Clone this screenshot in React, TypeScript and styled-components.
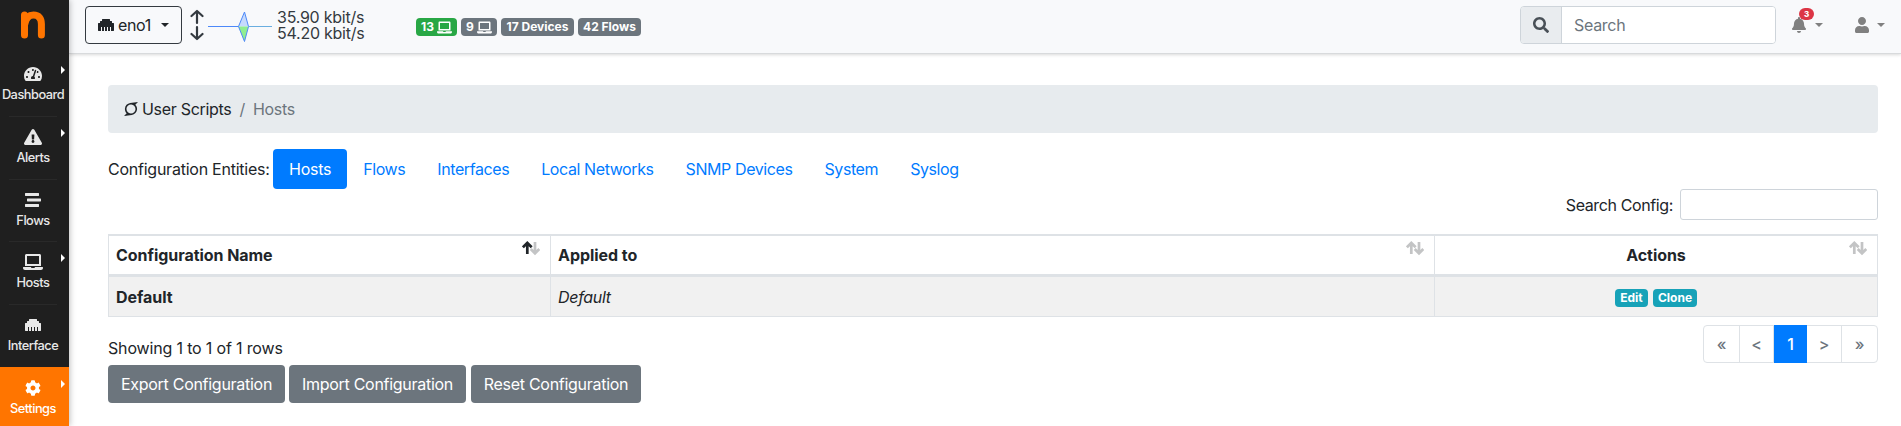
import React from "react";
import styled, { createGlobalStyle } from "styled-components";
import {
  FaTachometerAlt,
  FaExclamationTriangle,
  FaStream,
  FaLaptop,
  FaEthernet,
  FaCog,
  FaSearch,
  FaBell,
  FaUser,
  FaSuperpowers,
} from "react-icons/fa";

const GlobalStyle = createGlobalStyle`
  *, *::before, *::after { box-sizing: border-box; }
  body {
    margin: 0;
    overflow: hidden;
    background: #fff;
    color: #212529;
    font-family: Inter, "Liberation Sans", sans-serif;
    font-size: 16px;
    line-height: 24px;
    letter-spacing: -0.38px;
  }
  svg { display: block; flex: none; }
`;

const Page = styled.div`
  display: flex;
  height: 426px;
  overflow: hidden;
`;

const Sidebar = styled.nav`
  width: 69px;
  flex: none;
  display: flex;
  flex-direction: column;
  background: #1f1f1f;
  box-shadow: 1px 0 6px rgba(0, 0, 0, 0.25);
  z-index: 1;
`;

const Logo = styled.div`
  height: 53px;
  flex: none;
  padding: 11px 0 0 20px;
`;

const NavItem = styled.a<{ $active?: boolean; $last?: boolean }>`
  position: relative;
  height: 62.75px;
  flex: none;
  display: flex;
  flex-direction: column;
  align-items: center;
  padding-top: 12px;
  padding-right: 3px;
  color: ${(p) => (p.$active ? "#fff" : "#e8e8e8")};
  background: ${(p) => (p.$active ? "#ff7500" : "transparent")};
  font-size: 12.8px;
  line-height: 20px;
  font-weight: 500;
  letter-spacing: -0.5px;
  white-space: nowrap;

  &::after {
    content: "";
    display: ${(p) => (p.$active || p.$last ? "none" : "block")};
    position: absolute;
    left: 9px;
    right: 12px;
    bottom: -1px;
    height: 1px;
    background: #292929;
  }
`;

const NavIcon = styled.span`
  height: 18px;
  margin-bottom: 2px;
  display: flex;
  align-items: center;
  font-size: 16px;
`;

const NavCaret = styled.i`
  position: absolute;
  right: 4px;
  top: 13px;
  border: 4px solid transparent;
  border-left-color: #fff;
  border-right-width: 0;
`;

const Main = styled.div`
  flex: 1;
  min-width: 0;
  display: flex;
  flex-direction: column;
`;

const Topbar = styled.header`
  height: 54px;
  flex: none;
  display: flex;
  align-items: flex-start;
  padding: 6px 16px 0 16px;
  background: #f8f9fb;
  border-bottom: 1px solid #d8dadc;
  box-shadow: 0 1px 3px rgba(0, 0, 0, 0.15);
`;

const Caret = styled.i`
  border: 4px solid transparent;
  border-top-color: currentColor;
  border-bottom-width: 0;
`;

const IfaceButton = styled.button`
  width: 97px;
  height: 38px;
  padding: 0 12px;
  display: flex;
  align-items: center;
  border: 1px solid #343a40;
  border-radius: 4px;
  background: transparent;
  color: #212529;
  font: inherit;
  letter-spacing: -0.4px;

  span { margin: 0 auto 0 4px; }
`;

const Traffic = styled.div`
  display: flex;
  align-items: flex-start;
  height: 38px;
  margin-left: 8px;
  color: #343a40;
`;

const Chart = styled.svg`
  margin-left: 3px;
`;

const Rates = styled.div`
  margin: 3px 0 0 4px;
  width: 139px;
  line-height: 16px;
  letter-spacing: -0.25px;
  white-space: nowrap;
`;

const Badges = styled.div`
  display: flex;
  margin-top: 12px;
  gap: 4px;
`;

const Badge = styled.span<{ $bg: string; $w: number }>`
  width: ${(p) => p.$w}px;
  height: 18px;
  display: inline-flex;
  align-items: center;
  justify-content: center;
  gap: 3px;
  border-radius: 4px;
  background: ${(p) => p.$bg};
  color: #fff;
  font-size: 12px;
  line-height: 18px;
  font-weight: 700;
  letter-spacing: 0;
  white-space: nowrap;
`;

const SearchGroup = styled.div`
  display: flex;
  width: 256px;
  height: 38px;
  margin-left: auto;
  border: 1px solid #ced4da;
  border-radius: 4px;
  background: #fff;
  overflow: hidden;
`;

const SearchIcon = styled.span`
  width: 41px;
  display: flex;
  align-items: center;
  justify-content: center;
  background: #e9ecef;
  border-right: 1px solid #ced4da;
  color: #495057;
`;

const SearchInput = styled.input`
  flex: 1;
  min-width: 0;
  padding: 0 12px;
  border: 0;
  font: inherit;
  letter-spacing: -0.3px;
  &::placeholder { color: #6c757d; opacity: 1; }
`;

const IconMenu = styled.div<{ $ml: number; $gap: number }>`
  position: relative;
  height: 38px;
  margin-left: ${(p) => p.$ml}px;
  display: flex;
  align-items: center;
  gap: ${(p) => p.$gap}px;
  color: #808080;
`;

const AlertCount = styled.span`
  position: absolute;
  left: 8px;
  top: 2px;
  width: 15px;
  height: 12px;
  border-radius: 6px;
  background: #dc3545;
  color: #fff;
  font-size: 8px;
  line-height: 12px;
  font-weight: 800;
  text-align: center;
`;

const Content = styled.main`
  padding: 31px 23px 0 39px;
`;

const Breadcrumb = styled.div`
  height: 48px;
  display: flex;
  align-items: center;
  padding: 0 15px;
  border-radius: 4px;
  background: #e7ebee;
  letter-spacing: -0.3px;
`;

const CrumbText = styled.span`
  margin-left: 3px;
`;

const Muted = styled.span`
  margin-left: 8px;
  color: #6c757d;
`;

const Tabs = styled.div`
  height: 40px;
  margin-top: 16px;
  display: flex;
  align-items: center;
`;

const TabsLabel = styled.span`
  width: 165px;
  white-space: nowrap;
  letter-spacing: -0.24px;
`;

const Tab = styled.a<{ $active?: boolean }>`
  height: 40px;
  padding: 8px 16px;
  border-radius: 4px;
  color: ${(p) => (p.$active ? "#fff" : "#007bff")};
  background: ${(p) => (p.$active ? "#007bff" : "transparent")};
  letter-spacing: ${(p) => (p.$active ? -0.25 : -0.41)}px;
  white-space: nowrap;
`;

const Filter = styled.label`
  display: flex;
  align-items: center;
  justify-content: flex-end;
  gap: 7px;
  height: 31px;
`;

const FilterInput = styled.input`
  width: 198px;
  height: 31px;
  border: 1px solid #ced4da;
  border-radius: 3px;
`;

const Table = styled.div`
  margin-top: 14px;
  border: 1px solid #dee2e6;
  border-top-width: 2px;
`;

const Row = styled.div<{ $head?: boolean }>`
  display: grid;
  grid-template-columns: 442px 884px 1fr;
  height: ${(p) => (p.$head ? 41 : 39)}px;
  background: ${(p) => (p.$head ? "#fff" : "#f1f1f1")};
  border-bottom: ${(p) => (p.$head ? "3px solid #dee2e6" : "0")};
`;

const Cell = styled.div<{ $head?: boolean; $center?: boolean; $bold?: boolean; $italic?: boolean }>`
  position: relative;
  display: flex;
  align-items: center;
  justify-content: ${(p) => (p.$center ? "center" : "flex-start")};
  gap: 5px;
  padding: ${(p) => (p.$head ? 0 : p.$center ? 2 : 1)}px 7px 0;
  border-right: 1px solid #dee2e6;
  font-weight: ${(p) => (p.$bold ? 700 : 400)};
  font-style: ${(p) => (p.$italic ? "italic" : "normal")};
  letter-spacing: ${(p) => (p.$bold ? -0.05 : -0.3)}px;
  &:last-child { border-right: 0; }
`;

const SortMark = styled.span`
  position: absolute;
  right: 10px;
  top: 5px;
`;

const Footer = styled.div`
  display: flex;
  justify-content: space-between;
  height: 48px;
  padding-top: 8px;
`;

const Info = styled.div`
  padding-top: 11px;
  letter-spacing: -0.16px;
`;

const Pager = styled.div`
  display: flex;
  height: 38px;
  border: 1px solid #dee2e6;
  border-radius: 4px;
`;

const PageLink = styled.a<{ $w: number; $active?: boolean }>`
  width: ${(p) => p.$w}px;
  margin: ${(p) => (p.$active ? "-1px 0" : "0")};
  padding-top: ${(p) => (p.$active ? 1 : 0)}px;
  line-height: 36px;
  text-align: center;
  font-weight: 500;
  color: ${(p) => (p.$active ? "#fff" : "#6c757d")};
  background: ${(p) => (p.$active ? "#007bff" : "transparent")};
  border-right: ${(p) => (p.$active ? 0 : 1)}px solid #dee2e6;
  &:last-child { border-right: 0; }
`;

const Actions = styled.div`
  display: flex;
  gap: 4px;
`;

const Button = styled.button<{ $w: number }>`
  width: ${(p) => p.$w}px;
  height: 38px;
  padding: 0;
  border: 0;
  border-radius: 4px;
  background: #6c757d;
  color: #fff;
  font: inherit;
  letter-spacing: -0.28px;
  white-space: nowrap;
  &:last-child { margin-left: 1px; }
`;

const Sort = ({ asc }: { asc?: boolean }) => (
  <SortMark>
    <svg width="18" height="15" viewBox="0 0 18 15" fill="none" strokeWidth="2.7">
      <path d="M13 1v11M8.700 8l4.300 4.300L17.300 8" stroke="#c3c4c5" />
      <path d="M5.300 13V2M.9 6.300L5.300 2l4.400 4.300" stroke={asc ? "#212529" : "#c3c4c5"} />
    </svg>
  </SortMark>
);

const nav = [
  { label: "Dashboard", Icon: FaTachometerAlt, size: 18, caret: true },
  { label: "Alerts", Icon: FaExclamationTriangle, size: 18, caret: true },
  { label: "Flows", Icon: FaStream, size: 16 },
  { label: "Hosts", Icon: FaLaptop, size: 20, caret: true },
  { label: "Interface", Icon: FaEthernet, size: 16 },
  { label: "Settings", Icon: FaCog, size: 16, caret: true },
];

const tabs = ["Hosts", "Flows", "Interfaces", "Local Networks", "SNMP Devices", "System", "Syslog"];

export default function App() {
  return (
    <>
      <GlobalStyle />
      <Page>
        <Sidebar>
          <Logo>
            <svg width="26" height="29" viewBox="0 0 26 29" fill="none" stroke="#ff7500" strokeLinecap="round">
              <path d="M4.500 4v20" strokeWidth="7" />
              <path d="M5 12.500C6 6.500 9 4 13.500 4C19 4 21.400 7.500 21.400 13V24" strokeWidth="7" />
            </svg>
          </Logo>
          {nav.map(({ label, Icon, size, caret }) => (
            <NavItem key={label} $active={label === "Settings"} $last={label === "Interface"}>
              <NavIcon><Icon size={size} /></NavIcon>
              {label}
              {caret && <NavCaret />}
            </NavItem>
          ))}
        </Sidebar>
        <Main>
          <Topbar>
            <IfaceButton>
              <FaEthernet size={16} />
              <span>eno1</span>
              <Caret />
            </IfaceButton>
            <Traffic>
              <svg width="14" height="38" viewBox="0 0 14 38" fill="none" stroke="#343a40" strokeWidth="2.2" strokeLinecap="round" strokeLinejoin="round">
                <path d="M7 17V5.500M1.500 10L7 5l5.500 5M7 21v11.500M1.500 28L7 33l5.500-5" />
              </svg>
              <Chart width="66" height="38" viewBox="0 0 66 38">
                <path d="M31.500 20.500L37.500 6l4 14.500z" fill="#c6dafc" />
                <path d="M31.500 20.500L37.500 35.500l4-15z" fill="#90ee90" />
                <path d="M1 20.500H31.500L37.500 6l4 14.500M31.500 20.500L37.500 35.500l4-15" fill="none" stroke="#4d89f9" />
                <path d="M41.500 20.500H65" stroke="#6aaee0" />
              </Chart>
              <Rates>35.90 kbit/s<br />54.20 kbit/s</Rates>
            </Traffic>
            <Badges>
              <Badge $bg="#28a745" $w={41}>13 <FaLaptop size={15} /></Badge>
              <Badge $bg="#6c757d" $w={36}>9 <FaLaptop size={15} /></Badge>
              <Badge $bg="#6c757d" $w={73}>17 Devices</Badge>
              <Badge $bg="#6c757d" $w={63}>42 Flows</Badge>
            </Badges>
            <SearchGroup>
              <SearchIcon><FaSearch size={16} /></SearchIcon>
              <SearchInput placeholder="Search" />
            </SearchGroup>
            <IconMenu $ml={15} $gap={8}>
              <FaBell size={16} />
              <Caret />
              <AlertCount>3</AlertCount>
            </IconMenu>
            <IconMenu $ml={31} $gap={7}>
              <FaUser size={16} />
              <Caret />
            </IconMenu>
          </Topbar>
          <Content>
            <Breadcrumb>
              <FaSuperpowers size={16} />
              <CrumbText>User Scripts</CrumbText>
              <Muted>/</Muted>
              <Muted>Hosts</Muted>
            </Breadcrumb>
            <Tabs>
              <TabsLabel>Configuration Entities:</TabsLabel>
              {tabs.map((t) => (
                <Tab key={t} $active={t === "Hosts"}>{t}</Tab>
              ))}
            </Tabs>
            <Filter>
              Search Config:
              <FilterInput />
            </Filter>
            <Table>
              <Row $head>
                <Cell $head $bold>Configuration Name<Sort asc /></Cell>
                <Cell $head $bold>Applied to<Sort /></Cell>
                <Cell $head $bold $center>Actions<Sort /></Cell>
              </Row>
              <Row>
                <Cell $bold>Default</Cell>
                <Cell $italic>Default</Cell>
                <Cell $center>
                  <Badge $bg="#17a2b8" $w={33}>Edit</Badge>
                  <Badge $bg="#17a2b8" $w={44}>Clone</Badge>
                </Cell>
              </Row>
            </Table>
            <Footer>
              <Info>Showing 1 to 1 of 1 rows</Info>
              <Pager>
                <PageLink $w={36}>«</PageLink>
                <PageLink $w={34}>&lt;</PageLink>
                <PageLink $w={33} $active>1</PageLink>
                <PageLink $w={35}>&gt;</PageLink>
                <PageLink $w={35}>»</PageLink>
              </Pager>
            </Footer>
            <Actions>
              <Button $w={177}>Export Configuration</Button>
              <Button $w={177}>Import Configuration</Button>
              <Button $w={170}>Reset Configuration</Button>
            </Actions>
          </Content>
        </Main>
      </Page>
    </>
  );
}
